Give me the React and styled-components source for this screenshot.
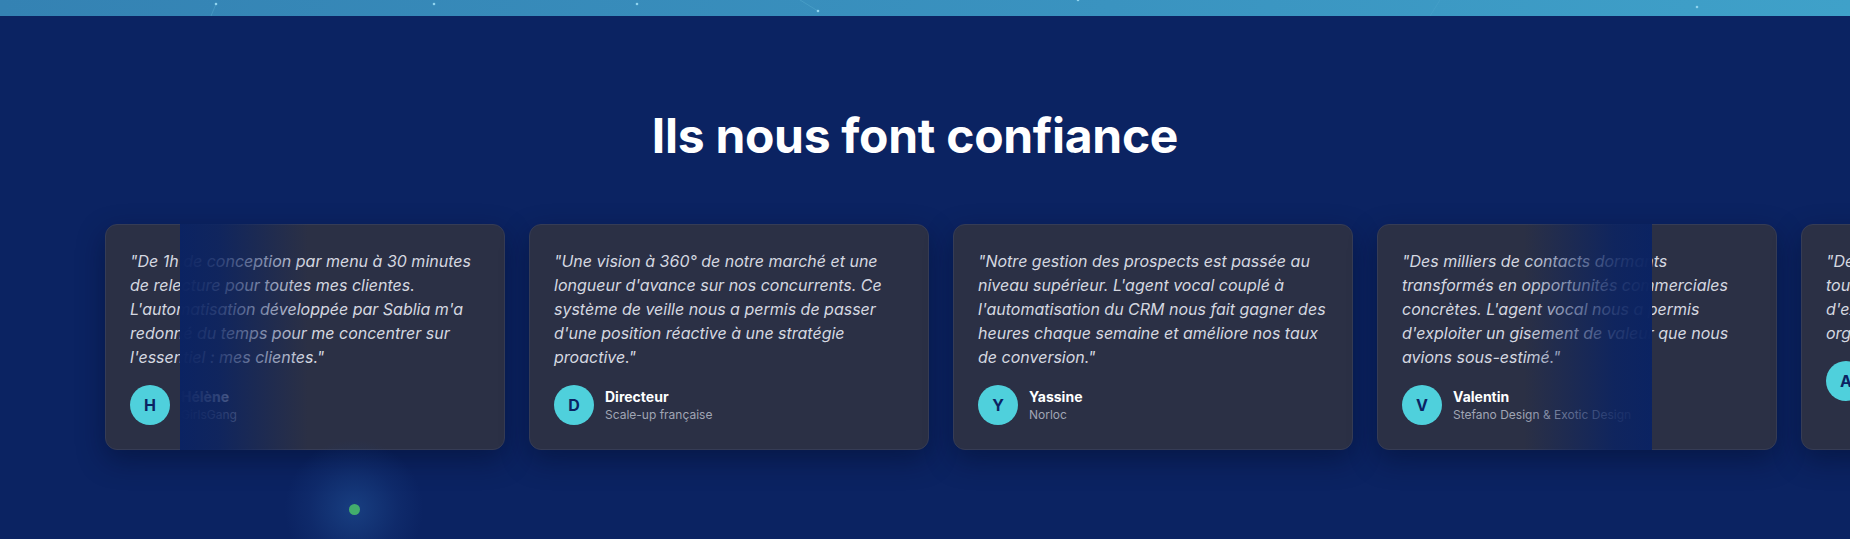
import React from 'react';
import styled, { createGlobalStyle } from 'styled-components';

const GlobalStyle = createGlobalStyle`
    html, body {
        margin: 0;
        padding: 0;
        background: #0b2362;
    }
    body {
        font-family: Inter, "Noto Sans", "Liberation Sans", sans-serif;
        -webkit-font-smoothing: antialiased;
    }
`;

const Section = styled.section`
    position: relative;
    min-height: 539px;
    background: #0b2362;
    overflow: hidden;
`;

const Band = styled.div`
    height: 16px;
    background: linear-gradient(90deg, #3482b3 0%, #3a93c0 60%, #3fa1c9 100%);

    svg {
        display: block;
    }
`;

const Title = styled.h2`
    margin: 91px 0 59px;
    padding-right: 20px;
    text-align: center;
    font-size: 48px;
    line-height: 58px;
    font-weight: 700;
    color: #ffffff;
    letter-spacing: -0.3px;
`;

const Marquee = styled.div`
    position: relative;
`;

const Track = styled.div`
    display: flex;
    gap: 24px;
    padding-left: 105px;
`;

const Card = styled.article`
    flex: 0 0 400px;
    box-sizing: border-box;
    height: 226px;
    padding: 24px;
    background: #2b3045;
    border: 1px solid #363c55;
    border-radius: 12px;
    box-shadow: 0 10px 28px rgba(3, 10, 40, 0.45);
    display: flex;
    flex-direction: column;
`;

const Quote = styled.p`
    margin: 0 0 16px;
    font-size: 16px;
    line-height: 24px;
    font-style: italic;
    color: #d5d8e0;
`;

const Author = styled.div`
    display: flex;
    align-items: center;
    gap: 11px;
`;

const Avatar = styled.div`
    width: 40px;
    height: 40px;
    flex: 0 0 40px;
    border-radius: 50%;
    background: #4fd0dc;
    color: #0b2362;
    display: flex;
    align-items: center;
    justify-content: center;
    font-weight: 700;
    font-size: 16px;
`;

const Who = styled.div`
    display: flex;
    flex-direction: column;
`;

const Name = styled.span`
    font-size: 14px;
    line-height: 20px;
    font-weight: 700;
    color: #ffffff;
`;

const Company = styled.span`
    font-size: 12px;
    line-height: 16px;
    color: #a0a5b4;
`;

const Fade = styled.div`
    position: absolute;
    top: 0;
    bottom: 0;
    width: 128px;
    pointer-events: none;
    ${({ $side }) => $side === 'left'
        ? 'left: 180px; background: linear-gradient(90deg, #0b2362 0%, rgba(11,35,98,0.85) 30%, rgba(11,35,98,0) 100%);'
        : 'right: 198px; background: linear-gradient(270deg, #0b2362 0%, rgba(11,35,98,0.85) 30%, rgba(11,35,98,0) 100%);'}
`;

const Glow = styled.div`
    position: absolute;
    left: 284px;
    top: 439px;
    width: 140px;
    height: 140px;
    border-radius: 50%;
    background: radial-gradient(circle, rgba(40, 95, 165, 0.45) 0%, rgba(30, 70, 140, 0.2) 45%, rgba(11, 35, 98, 0) 70%);
    display: flex;
    align-items: center;
    justify-content: center;

    &::after {
        content: '';
        width: 11px;
        height: 11px;
        border-radius: 50%;
        background: #43ad6c;
    }
`;

const testimonials = [
    {
        quote: "\"De 1h de conception par menu à 30 minutes de relecture pour toutes mes clientes. L'automatisation développée par Sablia m'a redonné du temps pour me concentrer sur l'essentiel : mes clientes.\"",
        name: 'Hélène',
        company: 'GirlsGang'
    },
    {
        quote: "\"Une vision à 360° de notre marché et une longueur d'avance sur nos concurrents. Ce système de veille nous a permis de passer d'une position réactive à une stratégie proactive.\"",
        name: 'Directeur',
        company: 'Scale-up française'
    },
    {
        quote: "\"Notre gestion des prospects est passée au niveau supérieur. L'agent vocal couplé à l'automatisation du CRM nous fait gagner des heures chaque semaine et améliore nos taux de conversion.\"",
        name: 'Yassine',
        company: 'Norloc'
    },
    {
        quote: "\"Des milliers de contacts dormants transformés en opportunités commerciales concrètes. L'agent vocal nous a permis d'exploiter un gisement de valeur que nous avions sous-estimé.\"",
        name: 'Valentin',
        company: 'Stefano Design & Exotic Design'
    },
    {
        quote: "\"Des processus clairs et automatisés pour toutes nos équipes, un gain de temps et d'excellents résultats dans toute notre organisation interne.\"",
        name: 'Antoine',
        company: 'Agence partenaire'
    }
];

const particles = [
    [216, 4], [434, 4], [637, 4], [818, 11], [1078, 0], [1697, 7]
];

const App = () => {
  return (
    <>
      <GlobalStyle />
      <Section>
        <Band>
          <svg width="1850" height="16" viewBox="0 0 1850 16">
            <line x1="216" y1="4" x2="211" y2="16" stroke="#6cc0e0" strokeOpacity="0.35" strokeWidth="0.8" />
            <line x1="818" y1="11" x2="800" y2="0" stroke="#6cc0e0" strokeOpacity="0.35" strokeWidth="0.8" />
            <line x1="1430" y1="16" x2="1440" y2="0" stroke="#6cc0e0" strokeOpacity="0.2" strokeWidth="0.8" />
            {particles.map(([x, y], i) => (
              <circle key={i} cx={x} cy={y} r="1.3" fill="#8fd3ee" />
            ))}
          </svg>
        </Band>

        <Title>Ils nous font confiance</Title>

        <Marquee>
          <Track>
            {testimonials.map((t) => (
              <Card key={t.name}>
                <Quote>{t.quote}</Quote>
                <Author>
                  <Avatar>{t.name.charAt(0)}</Avatar>
                  <Who>
                    <Name>{t.name}</Name>
                    <Company>{t.company}</Company>
                  </Who>
                </Author>
              </Card>
            ))}
          </Track>
          <Fade $side="left" />
          <Fade $side="right" />
        </Marquee>

        <Glow />
      </Section>
    </>
  )
}

export default App
